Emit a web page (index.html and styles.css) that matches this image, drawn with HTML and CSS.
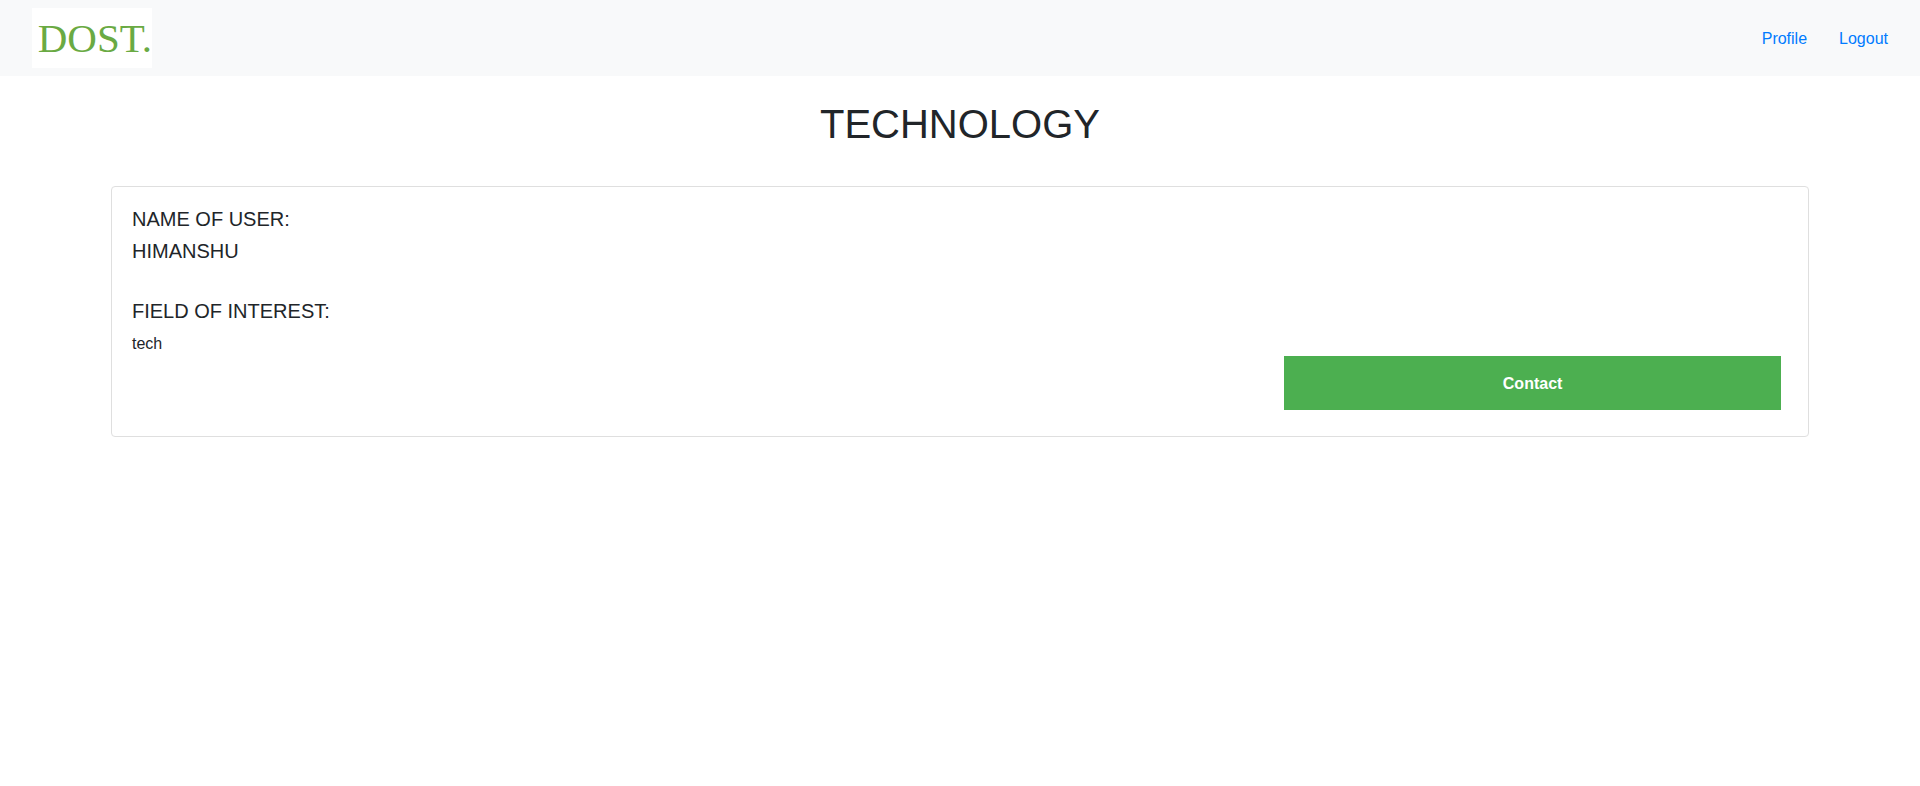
FILE: index.html
```html
<!DOCTYPE html>
<html lang="en">
<head>
  <meta charset="utf-8">
  <meta name="viewport" content="width=device-width, initial-scale=1">
  <title>Technology</title>
  <link rel="stylesheet" href="styles.css">
</head>
<body>
  <nav class="navbar">
    <a class="brand" href="#">DOST.</a>
    <div class="nav-links">
      <a class="nav-link" href="#">Profile</a>
      <a class="nav-link" href="#">Logout</a>
    </div>
  </nav>
  <main class="container">
    <h1 class="page-title">TECHNOLOGY</h1>
    <section class="card">
      <div class="field">
        <h5 class="card-title">NAME OF USER:</h5>
        <h5 class="card-title">HIMANSHU</h5>
      </div>
      <div class="field">
        <h5 class="card-title">FIELD OF INTEREST:</h5>
        <p class="card-text">tech</p>
      </div>
      <button class="contact-button" type="button">Contact</button>
    </section>
  </main>
</body>
</html>
```
FILE: styles.css
```css
* {
  box-sizing: border-box;
}

body {
  margin: 0;
  background: #fff;
  color: #212529;
  font-family: "Liberation Sans", Arial, sans-serif;
  font-size: 16px;
  line-height: 26px;
}

.navbar {
  display: flex;
  align-items: center;
  justify-content: space-between;
  padding: 8px 32px;
  background: #f8f9fa;
}

.brand {
  display: flex;
  align-items: center;
  justify-content: flex-end;
  width: 120px;
  height: 60px;
  background: #fff;
  color: #6aaa43;
  font-family: "Liberation Serif", "Times New Roman", serif;
  font-size: 41px;
  line-height: 60px;
  text-decoration: none;
}

.nav-links {
  display: flex;
  gap: 32px;
  padding-top: 2px;
}

.nav-link {
  color: #007bff;
  text-decoration: none;
}

.container {
  margin: 0 5%;
  padding: 24px 15px;
}

.page-title {
  margin: 0 0 38px;
  font-size: 40px;
  font-weight: 400;
  line-height: 48px;
  text-align: center;
}

.card {
  display: flex;
  flex-direction: column;
  padding: 20px;
  border: 1px solid #dfdfdf;
  border-radius: 4px;
}

.field {
  display: flex;
  flex-direction: column;
  gap: 8px;
}

.field + .field {
  margin-top: 36px;
}

.card-title {
  margin: 0;
  font-size: 20px;
  font-weight: 400;
  line-height: 24px;
}

.card-text {
  margin: 0;
}

.contact-button {
  align-self: flex-end;
  width: 30%;
  margin: -1px 7px 6px;
  padding: 15px 32px 13px;
  border: 0;
  background: #4caf50;
  color: #fff;
  font-family: inherit;
  font-size: 16px;
  font-weight: 700;
  line-height: 26px;
  cursor: pointer;
}
```
